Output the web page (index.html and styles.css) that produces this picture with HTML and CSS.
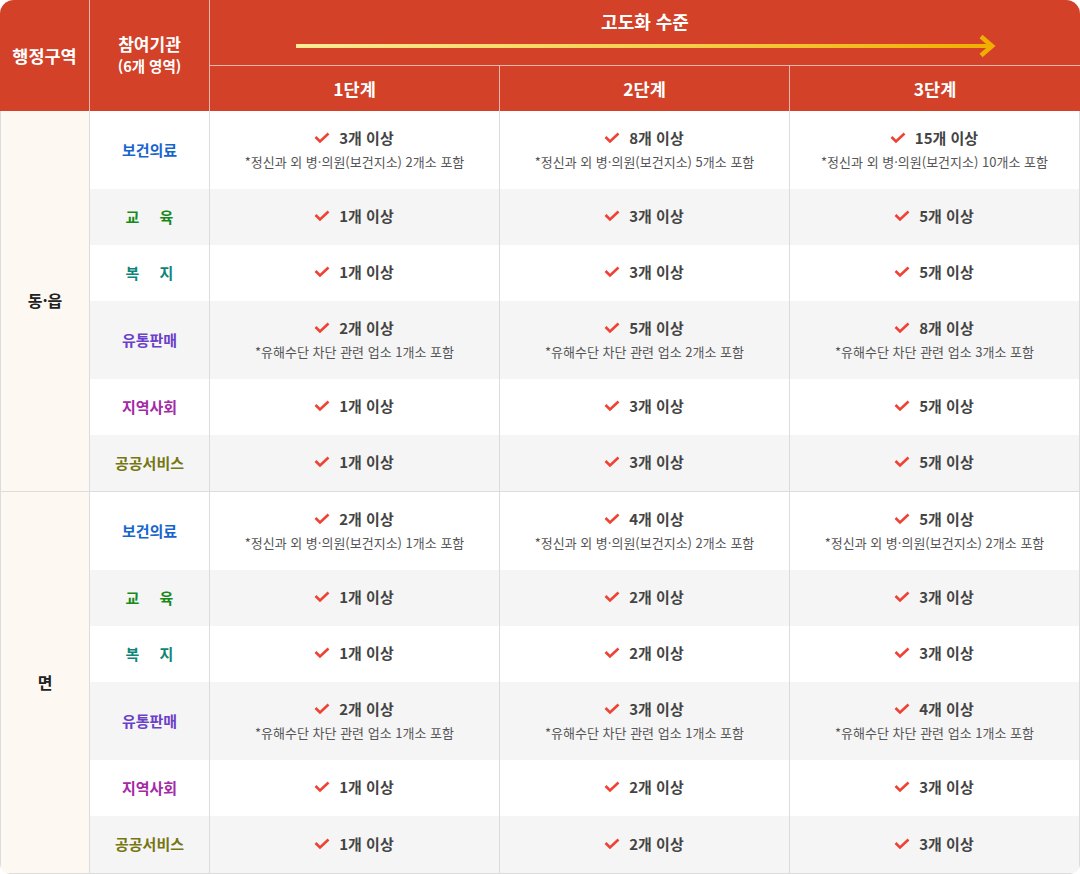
FILE: index.html
```html
<!DOCTYPE html>
<html lang="ko">
<head>
<meta charset="utf-8">
<title>고도화 수준</title>
<link rel="stylesheet" href="styles.css">
</head>
<body>
<div class="tbl">
  <div class="h h-region">행정구역</div>
  <div class="h h-org"><span class="h-org-main">참여기관</span><span class="h-org-sub">(6개 영역)</span></div>
  <div class="h h-level">
    <span class="h-level-title">고도화 수준</span>
    <svg class="arrow" width="704" height="24" viewBox="0 0 704 24">
      <defs>
        <linearGradient id="ag" x1="0" y1="0" x2="1" y2="0">
          <stop offset="0" stop-color="#fcec96"/>
          <stop offset="0.55" stop-color="#f6cf4a"/>
          <stop offset="1" stop-color="#f0ae00"/>
        </linearGradient>
      </defs>
      <rect x="0" y="10" width="696" height="4" fill="url(#ag)"/>
      <polyline points="685,2.5 696,12 685,21.5" fill="none" stroke="#f0ae00" stroke-width="4.6" stroke-linejoin="miter"/>
    </svg>
  </div>
  <div class="h h-step">1단계</div>
  <div class="h h-step">2단계</div>
  <div class="h h-step last-col">3단계</div>

  <!-- 동·읍 -->
  <div class="grp grp1">동·읍</div>

  <div class="cat blue">보건의료</div>
  <div class="cell"><div class="main"><svg class="chk" viewBox="0 0 16 12"><polyline points="1.5,5 6,9.5 14.5,1.5"/></svg>3개 이상</div><div class="sub">*정신과 외 병·의원(보건지소) 2개소 포함</div></div>
  <div class="cell"><div class="main"><svg class="chk" viewBox="0 0 16 12"><polyline points="1.5,5 6,9.5 14.5,1.5"/></svg>8개 이상</div><div class="sub">*정신과 외 병·의원(보건지소) 5개소 포함</div></div>
  <div class="cell last-col"><div class="main"><svg class="chk" viewBox="0 0 16 12"><polyline points="1.5,5 6,9.5 14.5,1.5"/></svg>15개 이상</div><div class="sub">*정신과 외 병·의원(보건지소) 10개소 포함</div></div>

  <div class="cat green alt"><span class="spaced">교 육</span></div>
  <div class="cell alt"><div class="main"><svg class="chk" viewBox="0 0 16 12"><polyline points="1.5,5 6,9.5 14.5,1.5"/></svg>1개 이상</div></div>
  <div class="cell alt"><div class="main"><svg class="chk" viewBox="0 0 16 12"><polyline points="1.5,5 6,9.5 14.5,1.5"/></svg>3개 이상</div></div>
  <div class="cell alt last-col"><div class="main"><svg class="chk" viewBox="0 0 16 12"><polyline points="1.5,5 6,9.5 14.5,1.5"/></svg>5개 이상</div></div>

  <div class="cat teal"><span class="spaced">복 지</span></div>
  <div class="cell"><div class="main"><svg class="chk" viewBox="0 0 16 12"><polyline points="1.5,5 6,9.5 14.5,1.5"/></svg>1개 이상</div></div>
  <div class="cell"><div class="main"><svg class="chk" viewBox="0 0 16 12"><polyline points="1.5,5 6,9.5 14.5,1.5"/></svg>3개 이상</div></div>
  <div class="cell last-col"><div class="main"><svg class="chk" viewBox="0 0 16 12"><polyline points="1.5,5 6,9.5 14.5,1.5"/></svg>5개 이상</div></div>

  <div class="cat purple alt">유통판매</div>
  <div class="cell alt"><div class="main"><svg class="chk" viewBox="0 0 16 12"><polyline points="1.5,5 6,9.5 14.5,1.5"/></svg>2개 이상</div><div class="sub">*유해수단 차단 관련 업소 1개소 포함</div></div>
  <div class="cell alt"><div class="main"><svg class="chk" viewBox="0 0 16 12"><polyline points="1.5,5 6,9.5 14.5,1.5"/></svg>5개 이상</div><div class="sub">*유해수단 차단 관련 업소 2개소 포함</div></div>
  <div class="cell alt last-col"><div class="main"><svg class="chk" viewBox="0 0 16 12"><polyline points="1.5,5 6,9.5 14.5,1.5"/></svg>8개 이상</div><div class="sub">*유해수단 차단 관련 업소 3개소 포함</div></div>

  <div class="cat magenta">지역사회</div>
  <div class="cell"><div class="main"><svg class="chk" viewBox="0 0 16 12"><polyline points="1.5,5 6,9.5 14.5,1.5"/></svg>1개 이상</div></div>
  <div class="cell"><div class="main"><svg class="chk" viewBox="0 0 16 12"><polyline points="1.5,5 6,9.5 14.5,1.5"/></svg>3개 이상</div></div>
  <div class="cell last-col"><div class="main"><svg class="chk" viewBox="0 0 16 12"><polyline points="1.5,5 6,9.5 14.5,1.5"/></svg>5개 이상</div></div>

  <div class="cat olive alt">공공서비스</div>
  <div class="cell alt"><div class="main"><svg class="chk" viewBox="0 0 16 12"><polyline points="1.5,5 6,9.5 14.5,1.5"/></svg>1개 이상</div></div>
  <div class="cell alt"><div class="main"><svg class="chk" viewBox="0 0 16 12"><polyline points="1.5,5 6,9.5 14.5,1.5"/></svg>3개 이상</div></div>
  <div class="cell alt last-col"><div class="main"><svg class="chk" viewBox="0 0 16 12"><polyline points="1.5,5 6,9.5 14.5,1.5"/></svg>5개 이상</div></div>

  <!-- 면 -->
  <div class="grp grp2 sep bottom">면</div>

  <div class="cat blue sep">보건의료</div>
  <div class="cell sep"><div class="main"><svg class="chk" viewBox="0 0 16 12"><polyline points="1.5,5 6,9.5 14.5,1.5"/></svg>2개 이상</div><div class="sub">*정신과 외 병·의원(보건지소) 1개소 포함</div></div>
  <div class="cell sep"><div class="main"><svg class="chk" viewBox="0 0 16 12"><polyline points="1.5,5 6,9.5 14.5,1.5"/></svg>4개 이상</div><div class="sub">*정신과 외 병·의원(보건지소) 2개소 포함</div></div>
  <div class="cell sep last-col"><div class="main"><svg class="chk" viewBox="0 0 16 12"><polyline points="1.5,5 6,9.5 14.5,1.5"/></svg>5개 이상</div><div class="sub">*정신과 외 병·의원(보건지소) 2개소 포함</div></div>

  <div class="cat green alt"><span class="spaced">교 육</span></div>
  <div class="cell alt"><div class="main"><svg class="chk" viewBox="0 0 16 12"><polyline points="1.5,5 6,9.5 14.5,1.5"/></svg>1개 이상</div></div>
  <div class="cell alt"><div class="main"><svg class="chk" viewBox="0 0 16 12"><polyline points="1.5,5 6,9.5 14.5,1.5"/></svg>2개 이상</div></div>
  <div class="cell alt last-col"><div class="main"><svg class="chk" viewBox="0 0 16 12"><polyline points="1.5,5 6,9.5 14.5,1.5"/></svg>3개 이상</div></div>

  <div class="cat teal"><span class="spaced">복 지</span></div>
  <div class="cell"><div class="main"><svg class="chk" viewBox="0 0 16 12"><polyline points="1.5,5 6,9.5 14.5,1.5"/></svg>1개 이상</div></div>
  <div class="cell"><div class="main"><svg class="chk" viewBox="0 0 16 12"><polyline points="1.5,5 6,9.5 14.5,1.5"/></svg>2개 이상</div></div>
  <div class="cell last-col"><div class="main"><svg class="chk" viewBox="0 0 16 12"><polyline points="1.5,5 6,9.5 14.5,1.5"/></svg>3개 이상</div></div>

  <div class="cat purple alt">유통판매</div>
  <div class="cell alt"><div class="main"><svg class="chk" viewBox="0 0 16 12"><polyline points="1.5,5 6,9.5 14.5,1.5"/></svg>2개 이상</div><div class="sub">*유해수단 차단 관련 업소 1개소 포함</div></div>
  <div class="cell alt"><div class="main"><svg class="chk" viewBox="0 0 16 12"><polyline points="1.5,5 6,9.5 14.5,1.5"/></svg>3개 이상</div><div class="sub">*유해수단 차단 관련 업소 1개소 포함</div></div>
  <div class="cell alt last-col"><div class="main"><svg class="chk" viewBox="0 0 16 12"><polyline points="1.5,5 6,9.5 14.5,1.5"/></svg>4개 이상</div><div class="sub">*유해수단 차단 관련 업소 1개소 포함</div></div>

  <div class="cat magenta">지역사회</div>
  <div class="cell"><div class="main"><svg class="chk" viewBox="0 0 16 12"><polyline points="1.5,5 6,9.5 14.5,1.5"/></svg>1개 이상</div></div>
  <div class="cell"><div class="main"><svg class="chk" viewBox="0 0 16 12"><polyline points="1.5,5 6,9.5 14.5,1.5"/></svg>2개 이상</div></div>
  <div class="cell last-col"><div class="main"><svg class="chk" viewBox="0 0 16 12"><polyline points="1.5,5 6,9.5 14.5,1.5"/></svg>3개 이상</div></div>

  <div class="cat olive alt bottom">공공서비스</div>
  <div class="cell alt bottom"><div class="main"><svg class="chk" viewBox="0 0 16 12"><polyline points="1.5,5 6,9.5 14.5,1.5"/></svg>1개 이상</div></div>
  <div class="cell alt bottom"><div class="main"><svg class="chk" viewBox="0 0 16 12"><polyline points="1.5,5 6,9.5 14.5,1.5"/></svg>2개 이상</div></div>
  <div class="cell alt bottom last-col"><div class="main"><svg class="chk" viewBox="0 0 16 12"><polyline points="1.5,5 6,9.5 14.5,1.5"/></svg>3개 이상</div></div>
</div>
</body>
</html>
```
FILE: styles.css
```css
* { box-sizing: border-box; }

html, body {
  margin: 0;
  padding: 0;
  background: #ffffff;
}

body {
  font-family: "Noto Sans CJK KR", "Noto Sans", sans-serif;
  color: #333;
}

.tbl {
  width: 1080px;
  display: grid;
  grid-template-columns: 90px 120px 290px 290px 290px;
  grid-template-rows: 66px 45px 78px 56px 56px 78px 56px 56px 79px 56px 56px 78px 56px 58px;
  border-radius: 14px 14px 10px 10px;
  overflow: hidden;
}

/* header */
.h {
  background: #d24128;
  color: #fff;
  font-weight: 700;
  display: flex;
  align-items: center;
  justify-content: center;
  border-right: 1px solid rgba(255, 255, 255, 0.62);
}

.h.last-col { border-right: none; }

.h-region {
  grid-row: 1 / span 2;
  font-size: 17.5px;
  padding-bottom: 1px;
}

.h-org {
  grid-row: 1 / span 2;
  flex-direction: column;
  padding-bottom: 3px;
}

.h-org-main {
  font-size: 17px;
  line-height: 24px;
}

.h-org-sub {
  font-size: 14.5px;
  line-height: 20px;
  font-weight: 600;
}

.h-level {
  grid-column: 3 / span 3;
  flex-direction: column;
  justify-content: flex-start;
  border-right: none;
  border-bottom: 1px solid rgba(255, 255, 255, 0.62);
}

.h-level-title {
  font-size: 18px;
  font-weight: 600;
  line-height: 22px;
  margin-top: 10px;
}

.arrow {
  display: block;
  margin-top: 2px;
  margin-left: 6px;
}

.h-step {
  font-size: 17.5px;
  padding-bottom: 1px;
}

/* body */
.grp {
  grid-column: 1;
  grid-row: span 6;
  background: #fdf9f2;
  border-left: 1px solid #dcdcdc;
  border-right: 1px solid #dcdcdc;
  display: flex;
  align-items: center;
  justify-content: center;
  font-size: 16px;
  font-weight: 600;
  color: #222;
  padding-bottom: 2px;
}

.cat {
  display: flex;
  align-items: center;
  justify-content: center;
  font-size: 15px;
  font-weight: 700;
  border-right: 1px solid #dcdcdc;
  background: #fff;
  padding-bottom: 2px;
}

.spaced { word-spacing: 16px; }

.blue { color: #1565cc; }
.green { color: #168a1c; }
.teal { color: #0f857a; }
.purple { color: #6b40c9; }
.magenta { color: #a42aa6; }
.olive { color: #777512; }

.cell {
  display: flex;
  flex-direction: column;
  align-items: center;
  justify-content: center;
  border-right: 1px solid #dcdcdc;
  background: #fff;
  padding-bottom: 2px;
}

.alt { background: #f5f5f5; }

.sep { border-top: 1px solid #dcdcdc; }
.bottom { border-bottom: 1px solid #dcdcdc; }

.main {
  display: flex;
  align-items: center;
  font-size: 15px;
  font-weight: 700;
  line-height: 22px;
  color: #444;
}

.chk {
  width: 16px;
  height: 12px;
  margin-right: 9px;
  margin-left: -1px;
  flex: none;
}

.chk polyline {
  fill: none;
  stroke: #f04234;
  stroke-width: 2.6;
  stroke-linejoin: miter;
}

.sub {
  font-size: 13px;
  line-height: 20px;
  margin-top: 3px;
  color: #555;
}
```
